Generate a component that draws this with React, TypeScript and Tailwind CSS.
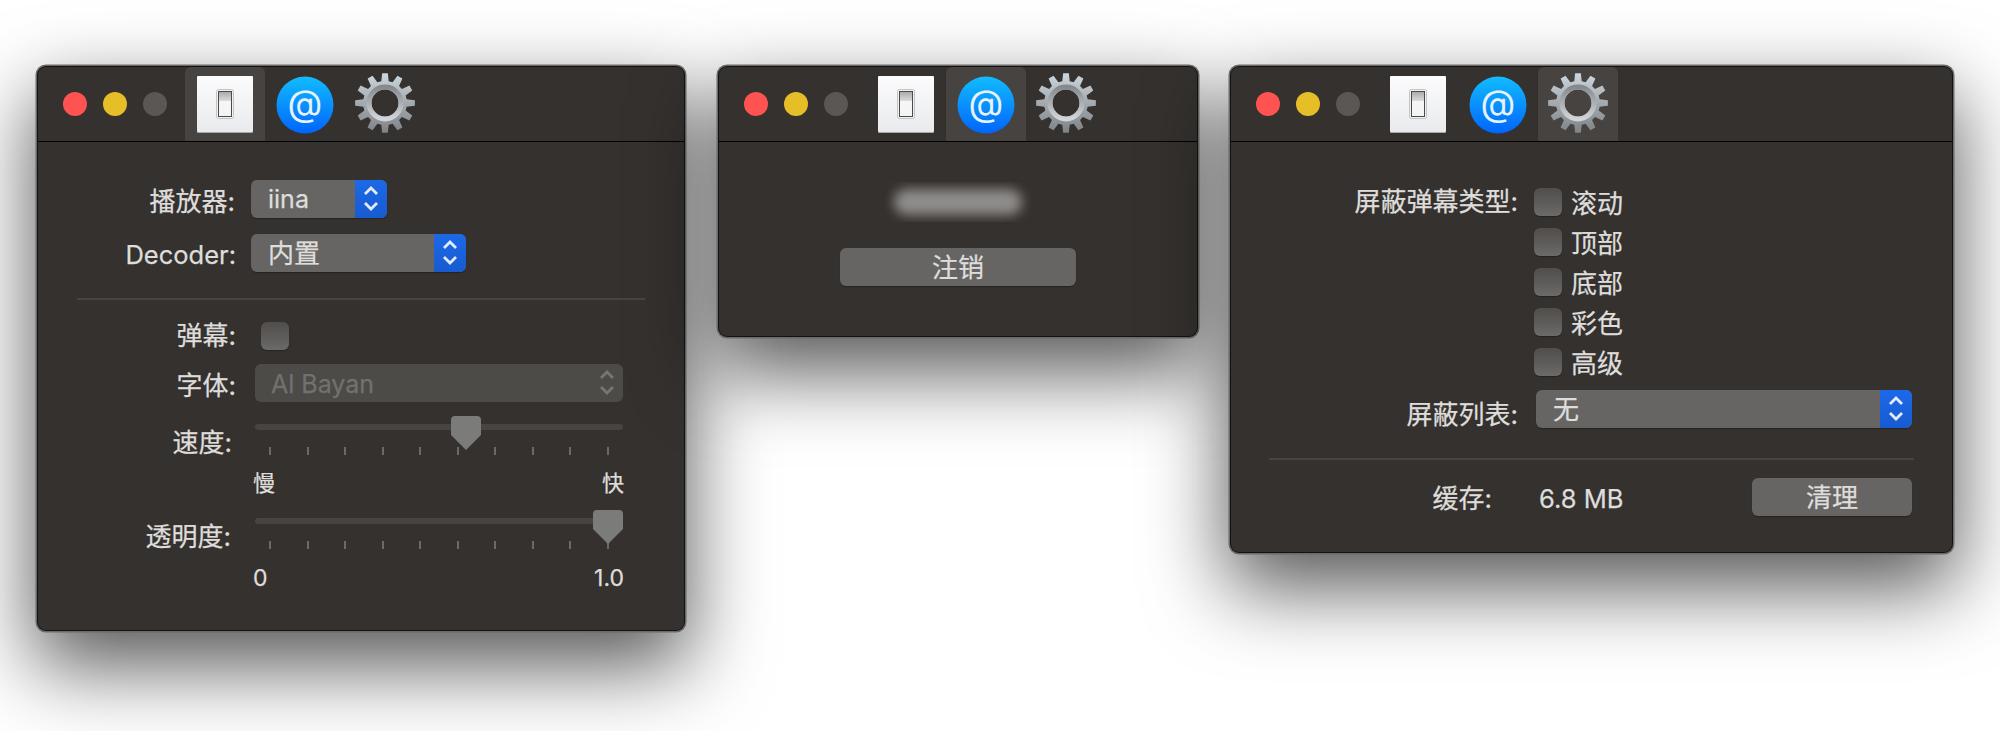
import React from "react";

const gearPath = (() => {
  const teeth = 12;
  const ro = 30;
  const rr = 22;
  let d = "";
  for (let i = 0; i < teeth; i++) {
    const a = (i * 2 * Math.PI) / teeth - Math.PI / 2;
    const pts: [number, number][] = [
      [rr, -0.17],
      [ro, -0.095],
      [ro, 0.095],
      [rr, 0.17],
    ];
    pts.forEach(([r, off], j) => {
      const x = (r * Math.cos(a + off)).toFixed(2);
      const y = (r * Math.sin(a + off)).toFixed(2);
      d += `${i === 0 && j === 0 ? "M" : "L"}${x} ${y} `;
    });
  }
  d += "Z M13.5 0 A13.5 13.5 0 1 0 -13.5 0 A13.5 13.5 0 1 0 13.5 0 Z";
  return d;
})();

function Gear() {
  return (
    <svg width="62" height="62" viewBox="-31 -31 62 62" className="-mt-1">
      <defs>
        <linearGradient id="gearBody" x1="0" y1="0" x2="0" y2="1">
          <stop offset="0" stopColor="#ccd6dc" />
          <stop offset="0.5" stopColor="#a4abb0" />
          <stop offset="1" stopColor="#7d8387" />
        </linearGradient>
        <linearGradient id="gearRing" x1="0" y1="0" x2="0" y2="1">
          <stop offset="0" stopColor="#858a8e" />
          <stop offset="1" stopColor="#d2d6d9" />
        </linearGradient>
      </defs>
      <path d={gearPath} fill="url(#gearBody)" fillRule="evenodd" />
      <circle r="16" fill="none" stroke="url(#gearRing)" strokeWidth="5" />
    </svg>
  );
}

function AtIcon() {
  return (
    <svg width="58" height="58" viewBox="0 0 58 58">
      <defs>
        <linearGradient id="atBg" x1="0" y1="0" x2="0" y2="1">
          <stop offset="0" stopColor="#12bcff" />
          <stop offset="1" stopColor="#0065fb" />
        </linearGradient>
      </defs>
      <circle cx="29" cy="29" r="28.5" fill="url(#atBg)" />
      <text
        x="29"
        y="40"
        textAnchor="middle"
        fontSize="36"
        fill="#e6f3ff"
        fontFamily="Inter, sans-serif"
      >
        @
      </text>
    </svg>
  );
}

function SwitchIcon() {
  return (
    <div className="flex h-[56px] w-[56px] items-center justify-center rounded-[1px] bg-gradient-to-b from-[#fcfcfd] to-[#e8eaed] shadow-[0_1px_0_#a9a9a9]">
      <svg width="18" height="30" viewBox="0 0 18 30">
        <defs>
          <linearGradient id="rocker" x1="0" y1="0" x2="0" y2="1">
            <stop offset="0" stopColor="#a8a8a8" />
            <stop offset="0.38" stopColor="#dcdcdc" />
            <stop offset="0.39" stopColor="#f6f6f6" />
            <stop offset="1" stopColor="#f4f4f4" />
          </linearGradient>
        </defs>
        <rect x="0.5" y="0.5" width="17" height="29" rx="2" fill="#f2f2f2" stroke="#c4c4c4" />
        <rect x="2.5" y="2.5" width="13" height="25" fill="url(#rocker)" stroke="#4a4a4a" />
      </svg>
    </div>
  );
}

function Titlebar({ active }: { active: number }) {
  const icons = [<SwitchIcon />, <AtIcon />, <Gear />];
  return (
    <div className="box-border flex h-[75px] items-start border-b border-black pl-[25px]">
      <div className="mt-[25px] flex gap-4">
        <div className="h-6 w-6 rounded-full bg-[#fe5350]" />
        <div className="h-6 w-6 rounded-full bg-[#e6bf28]" />
        <div className="h-6 w-6 rounded-full bg-[#5a5755]" />
      </div>
      <div className="ml-[18px] flex">
        {icons.map((icon, i) => (
          <div
            key={i}
            className={`flex h-[74px] w-20 items-start justify-center rounded-t-[6px] pt-[9px] ${
              active === i ? "bg-[#474340]" : ""
            }`}
          >
            {icon}
          </div>
        ))}
      </div>
    </div>
  );
}

function Window({
  left,
  width,
  height,
  active,
  children,
}: {
  left: string;
  width: string;
  height: string;
  active: number;
  children: React.ReactNode;
}) {
  return (
    <div
      className={`absolute top-[67px] ${left} ${width} ${height} rounded-[8px] bg-[#35312e] text-[#dedddc] [-webkit-text-stroke:0.25px_#dedddc] shadow-[0_0_0_1px_#141312,0_0_0_2.5px_#6a6a6a,0_32px_80px_4px_rgba(0,0,0,0.66)]`}
    >
      <Titlebar active={active} />
      {children}
    </div>
  );
}

function Chevrons({ color }: { color: string }) {
  return (
    <svg width="32" height="38" viewBox="0 0 32 38" fill="none" stroke={color} strokeWidth="2.8">
      <path d="M10 14 L16 8 L22 14" />
      <path d="M10 23 L16 29 L22 23" />
    </svg>
  );
}

function Select({ text, width, cjk }: { text: string; width: string; cjk?: boolean }) {
  return (
    <div
      className={`flex h-[38px] ${width} overflow-hidden rounded-[6px] bg-[#666563] shadow-[0_1px_1px_rgba(0,0,0,0.3)]`}
    >
      <div className={`flex-1 pl-[17px] ${cjk ? "text-[26px] leading-[40px]" : "text-[25px] leading-[38px]"}`}>
        {text}
      </div>
      <div className="h-[38px] w-8 bg-gradient-to-b from-[#1c69e8] to-[#175bd0]">
        <Chevrons color="#e4ecfb" />
      </div>
    </div>
  );
}

function DisabledSelect({ text }: { text: string }) {
  return (
    <div className="flex h-[38px] w-[368px] justify-between rounded-[6px] bg-[#4c4b48] pl-[16px] text-[25px] text-[#72716e] [-webkit-text-stroke:0.25px_#72716e]">
      <span className="leading-[41px]">{text}</span>
      <Chevrons color="#777673" />
    </div>
  );
}

function Checkbox() {
  return (
    <div className="h-7 w-7 rounded-[6px] bg-gradient-to-b from-[#504d4b] to-[#6b6a68] shadow-[0_1px_1px_rgba(0,0,0,0.3)]" />
  );
}

function Slider({ thumb }: { thumb: "mid" | "end" }) {
  return (
    <div className="relative h-[39px] w-[368px] pt-2">
      <div className="h-[6px] rounded-full bg-[#474441]" />
      <div className="mt-[17px] flex justify-between px-[14px]">
        {Array.from({ length: 10 }).map((_, i) => (
          <div key={i} className="h-2 w-[2px] bg-[#6b6966]" />
        ))}
      </div>
      <svg
        className={`absolute top-0 ${thumb === "mid" ? "left-[196px]" : "left-[338px]"}`}
        width="30"
        height="34"
        viewBox="0 0 30 34"
      >
        <path d="M4 0 H26 Q30 0 30 4 V19 L15 34 L0 19 V4 Q0 0 4 0 Z" fill="#7b7b79" />
      </svg>
    </div>
  );
}

function Label({
  text,
  className,
  latin,
}: {
  text: string;
  className: string;
  latin?: boolean;
}) {
  return (
    <div className={`${className} shrink-0 text-right ${latin ? "text-[25.5px]" : "text-[26px]"} leading-[38px]`}>
      {text}
    </div>
  );
}

function Button({ text, width }: { text: string; width: string }) {
  return (
    <div
      className={`h-[38px] ${width} shrink-0 rounded-[6px] bg-[#666563] text-center text-[26px] leading-[39px] shadow-[0_1px_1px_rgba(0,0,0,0.3)]`}
    >
      {text}
    </div>
  );
}

function PlayerWindow() {
  return (
    <Window left="left-[38px]" width="w-[646px]" height="h-[563px]" active={0}>
      <div className="flex flex-col">
        <div className="mt-[38px] flex h-[38px]">
          <Label text="播放器:" className="w-[197px] pt-[3px]" />
          <div className="ml-4">
            <Select text="iina" width="w-[136px]" />
          </div>
        </div>
        <div className="mt-4 flex h-[38px]">
          <Label text="Decoder:" className="w-[198px] pt-[2px]" latin />
          <div className="ml-[15px]">
            <Select text="内置" width="w-[215px]" cjk />
          </div>
        </div>
        <div className="ml-[39px] mt-[26px] h-[2px] w-[568px] bg-[#474441]" />
        <div className="mt-[22px] flex h-7 items-center">
          <Label text="弹幕:" className="w-[198px]" />
          <div className="ml-[25px]">
            <Checkbox />
          </div>
        </div>
        <div className="mt-[14px] flex h-[38px]">
          <Label text="字体:" className="w-[198px] pt-[3px]" />
          <div className="ml-[19px]">
            <DisabledSelect text="Al Bayan" />
          </div>
        </div>
        <div className="mt-[14px] flex h-[39px]">
          <Label text="速度:" className="w-[194px] pt-[8px]" />
          <div className="ml-[23px]">
            <Slider thumb="mid" />
          </div>
        </div>
        <div className="ml-[215px] mt-[13px] flex h-[30px] w-[371px] justify-between text-[22px] leading-[30px]">
          <span>慢</span>
          <span>快</span>
        </div>
        <div className="mt-3 flex h-[39px]">
          <Label text="透明度:" className="w-[193px] pt-[8px]" />
          <div className="ml-6">
            <Slider thumb="end" />
          </div>
        </div>
        <div className="ml-[215px] mt-[14px] flex h-[30px] w-[371px] justify-between text-[23px] leading-[30px]">
          <span>0</span>
          <span>1.0</span>
        </div>
      </div>
    </Window>
  );
}

function AccountWindow() {
  return (
    <Window left="left-[719px]" width="w-[478px]" height="h-[269px]" active={1}>
      <div className="flex flex-col items-center">
        <div className="mt-10 flex h-10 w-[146px] items-center justify-center overflow-hidden">
          <div className="h-[26px] w-[128px] rounded-full bg-[#8f8d8b] blur-[6px]" />
        </div>
        <div className="mt-[26px]">
          <Button text="注销" width="w-[236px]" />
        </div>
      </div>
    </Window>
  );
}

function FilterWindow() {
  const kinds = ["滚动", "顶部", "底部", "彩色", "高级"];
  return (
    <Window left="left-[1231px]" width="w-[721px]" height="h-[485px]" active={2}>
      <div className="flex flex-col">
        <div className="mt-[39px] flex items-start">
          <Label text="屏蔽弹幕类型:" className="w-[287px] pt-[2px]" />
          <div className="ml-4 mt-[7px] flex flex-col gap-3">
            {kinds.map((k) => (
              <div key={k} className="flex h-7 items-center">
                <Checkbox />
                <span className="ml-[9px] translate-y-[2px] text-[26px] leading-7">{k}</span>
              </div>
            ))}
          </div>
        </div>
        <div className="mt-[14px] flex h-[38px]">
          <Label text="屏蔽列表:" className="w-[287px] pt-[6px]" />
          <div className="ml-[18px]">
            <Select text="无" width="w-[376px]" cjk />
          </div>
        </div>
        <div className="ml-[38px] mt-[30px] h-[2px] w-[645px] bg-[#474441]" />
        <div className="mt-[18px] flex h-[38px] pr-10">
          <Label text="缓存:" className="w-[261px] pt-[2px]" />
          <div className="ml-[47px] flex-1 text-[25.5px] leading-[42px]">6.8 MB</div>
          <Button text="清理" width="w-[160px]" />
        </div>
      </div>
    </Window>
  );
}

export default function App() {
  return (
    <div className="relative h-[731px] w-[2000px] overflow-hidden bg-white font-[Inter,'Noto_Sans_CJK_SC',sans-serif]">
      <PlayerWindow />
      <AccountWindow />
      <FilterWindow />
    </div>
  );
}
